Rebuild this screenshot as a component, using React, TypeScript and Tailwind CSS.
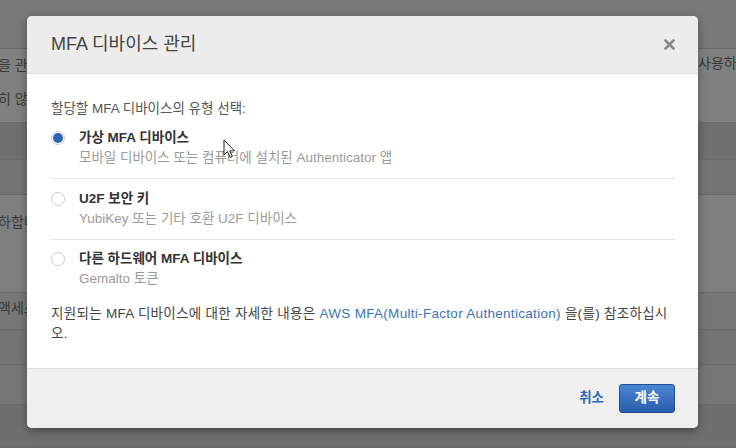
import React from "react";

// Background page rows (dimmed by the modal overlay)
const ROWS = [
  { h: 49, bg: "bg-[#787878]", pt: "pt-[7px]", left: "", right: "" },
  { h: 74, bg: "bg-[#808080]", pt: "pt-[6px]", left: "을 관리", right: "사용하십시오", left2: "히 않" },
  { h: 37, bg: "bg-[#6f6f6f]", pt: "pt-[7px]", left: "", right: "" },
  { h: 35, bg: "bg-[#747474]", pt: "pt-[7px]", left: "", right: "" },
  { h: 98, bg: "bg-[#7f7f7f]", pt: "pt-[17px]", left: "하합니다", right: "" },
  { h: 37, bg: "bg-[#767676]", pt: "pt-[5px]", left: "액세스", right: "" },
  { h: 35, bg: "bg-[#737373]", pt: "pt-[7px]", left: "", right: "" },
  { h: 40, bg: "bg-[#767676]", pt: "pt-[7px]", left: "", right: "" },
  { h: 43, bg: "bg-[#6e6e6e]", pt: "pt-[7px]", left: "", right: "" },
];

function Radio({ checked }: { checked?: boolean }) {
  return (
    <span className="mt-[3px] flex h-[14px] w-[14px] shrink-0 items-center justify-center rounded-full border border-[#c9c9c9] bg-white">
      {checked && <span className="h-[10px] w-[10px] rounded-full bg-[#2b63b6]" />}
    </span>
  );
}

function Option({ checked, label, desc }: { checked?: boolean; label: string; desc: string }) {
  return (
    <div className="flex gap-[14px]">
      <Radio checked={checked} />
      <div className="leading-[20px]">
        <div className="font-bold text-[#333]">{label}</div>
        <div className="text-[#9a9a9a]">{desc}</div>
      </div>
    </div>
  );
}

export default function App() {
  return (
    <div className="relative h-[448px] w-full overflow-hidden font-['Liberation_Sans','Noto_Sans_CJK_KR',sans-serif] text-[13.5px]">
      {/* dimmed page behind */}
      <div className="flex flex-col">
        {ROWS.map((r, i) => (
          <div
            key={i}
            style={{ height: r.h }}
            className={`${r.bg} relative flex justify-between border-b border-[#6a6a6a] text-[14px] text-[#3a3a3a]`}
          >
            <div className={`-ml-[2px] flex flex-col leading-[20px] ${r.pt}`}>
              {r.left && <span>{r.left}</span>}
              {r.left2 && <span className="mt-[14px]">{r.left2}</span>}
            </div>
            <div className="w-[38px] whitespace-nowrap pt-[4px] leading-[20px]">{r.right}</div>
          </div>
        ))}
      </div>

      {/* modal */}
      <div className="absolute left-[27px] top-[16px] w-[671px] overflow-hidden rounded-[5px] bg-white shadow-[0_3px_8px_rgba(0,0,0,0.35)]">
        <div className="flex h-[58px] items-center justify-between border-b border-[#dcdcdc] bg-[#ececec] pl-6 pr-[23px]">
          <h2 className="text-[18px] text-[#444]">MFA 디바이스 관리</h2>
          <svg width="11" height="11" viewBox="0 0 11 11">
            <path d="M1.5 1.5 L9.5 9.5 M9.5 1.5 L1.5 9.5" stroke="#8a8a8a" strokeWidth="2.6" strokeLinecap="round" />
          </svg>
        </div>

        <div className="pb-[24px] pl-6 pr-[23px] pt-[25px] text-[#555]">
          <p className="leading-[20px]">할당할 MFA 디바이스의 유형 선택:</p>
          <div className="mt-[9px] flex flex-col">
            <div className="border-b border-[#e3e3e3] pb-[10px]">
              <Option checked label="가상 MFA 디바이스" desc="모바일 디바이스 또는 컴퓨터에 설치된 Authenticator 앱" />
            </div>
            <div className="border-b border-[#e3e3e3] pb-[10px] pt-[10px]">
              <Option label="U2F 보안 키" desc="YubiKey 또는 기타 호환 U2F 디바이스" />
            </div>
            <div className="pt-[9px]">
              <Option label="다른 하드웨어 MFA 디바이스" desc="Gemalto 토큰" />
            </div>
          </div>
          <p className="mt-[15px] leading-[20px] tracking-[0.3px] text-[#444]">
            지원되는 MFA 디바이스에 대한 자세한 내용은{" "}
            <a className="text-[#3b73b9]">AWS MFA(Multi-Factor Authentication)</a> 을(를) 참조하십시
            <br />
            오.
          </p>
        </div>

        <div className="flex h-[60px] items-center justify-end gap-[15px] border-t border-[#dedede] bg-[#efefef] pr-[23px]">
          <a className="font-bold text-[#2f6bb3]">취소</a>
          <button className="h-[29px] w-[56px] rounded-[3px] border border-[#1f4f96] bg-gradient-to-b from-[#4a86d3] to-[#2a5eac] font-bold text-white">
            계속
          </button>
        </div>
      </div>

      {/* mouse cursor */}
      <svg className="absolute left-[223px] top-[139px]" width="13" height="20" viewBox="0 0 13 20">
        <path d="M1 1 L1 16 L4.5 12.5 L7 18.5 L9.2 17.6 L6.8 11.8 L11.5 11.8 Z" fill="#fff" stroke="#222" strokeWidth="1" strokeLinejoin="round" />
      </svg>
    </div>
  );
}
